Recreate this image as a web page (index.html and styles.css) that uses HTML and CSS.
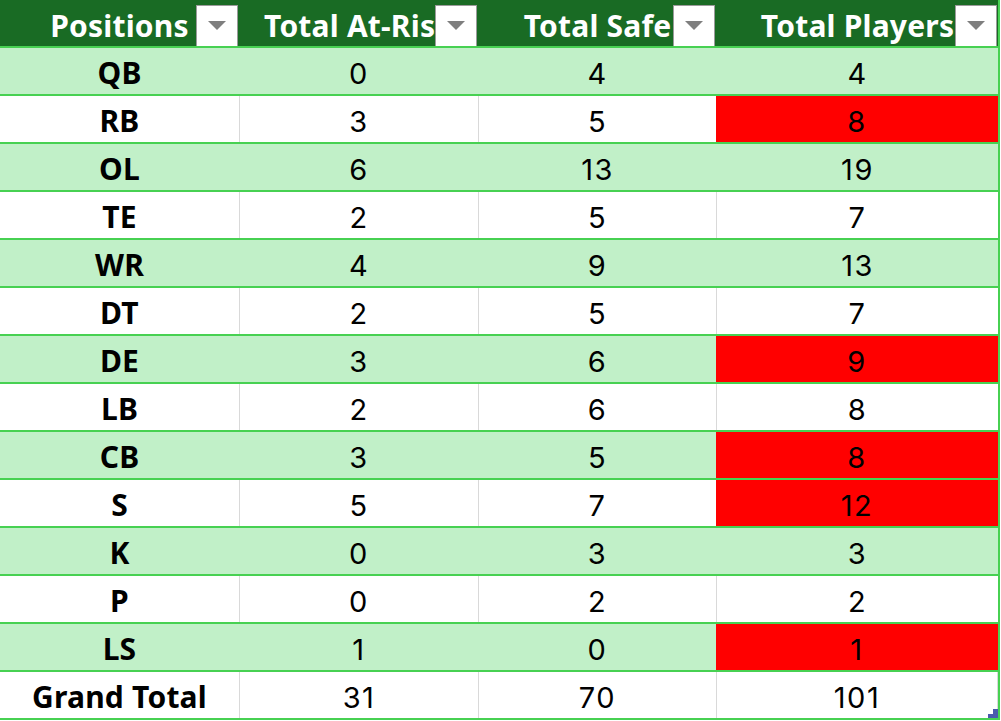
FILE: index.html
```html
<!DOCTYPE html>
<html>
<head>
<meta charset="utf-8">
<link rel="stylesheet" href="styles.css">
</head>
<body>
<div class="sheet">
  <div class="row head">
    <div class="cell"><span class="label">Positions</span><span class="dd"><span class="tri"></span></span></div>
    <div class="cell"><span class="label">Total At-Risk</span><span class="dd"><span class="tri"></span></span></div>
    <div class="cell"><span class="label">Total Safe</span><span class="dd"><span class="tri"></span></span></div>
    <div class="cell"><span class="label">Total Players</span><span class="dd"><span class="tri"></span></span></div>
  </div>
  <div class="row band"><div class="cell pos">QB</div><div class="cell">0</div><div class="cell">4</div><div class="cell">4</div></div>
  <div class="row"><div class="cell pos">RB</div><div class="cell">3</div><div class="cell">5</div><div class="cell red">8</div></div>
  <div class="row band"><div class="cell pos">OL</div><div class="cell">6</div><div class="cell">13</div><div class="cell">19</div></div>
  <div class="row"><div class="cell pos">TE</div><div class="cell">2</div><div class="cell">5</div><div class="cell">7</div></div>
  <div class="row band"><div class="cell pos">WR</div><div class="cell">4</div><div class="cell">9</div><div class="cell">13</div></div>
  <div class="row"><div class="cell pos">DT</div><div class="cell">2</div><div class="cell">5</div><div class="cell">7</div></div>
  <div class="row band"><div class="cell pos">DE</div><div class="cell">3</div><div class="cell">6</div><div class="cell red">9</div></div>
  <div class="row"><div class="cell pos">LB</div><div class="cell">2</div><div class="cell">6</div><div class="cell">8</div></div>
  <div class="row band"><div class="cell pos">CB</div><div class="cell">3</div><div class="cell">5</div><div class="cell red">8</div></div>
  <div class="row"><div class="cell pos">S</div><div class="cell">5</div><div class="cell">7</div><div class="cell red">12</div></div>
  <div class="row band"><div class="cell pos">K</div><div class="cell">0</div><div class="cell">3</div><div class="cell">3</div></div>
  <div class="row"><div class="cell pos">P</div><div class="cell">0</div><div class="cell">2</div><div class="cell">2</div></div>
  <div class="row band"><div class="cell pos">LS</div><div class="cell">1</div><div class="cell">0</div><div class="cell red">1</div></div>
  <div class="row total"><div class="cell pos">Grand Total</div><div class="cell">31</div><div class="cell">70</div><div class="cell">101</div><span class="handle"></span></div>
</div>
</body>
</html>
```
FILE: styles.css
```css
html, body {
  margin: 0;
  padding: 0;
  background: #ffffff;
}
body {
  font-family: Inter, "Noto Sans", "Liberation Sans", sans-serif;
  color: #000000;
}
.sheet {
  width: 1000px;
  border-right: 2px solid #47d152;
  box-sizing: border-box;
}
.row {
  position: relative;
  display: grid;
  grid-template-columns: 240px 239px 238px 281px;
  height: 48px;
  box-sizing: border-box;
  border-bottom: 2px solid #47d152;
  background: #ffffff;
}
.row.band {
  background: #c1f0c8;
}
.row.head {
  background: #196b24;
}
.cell {
  position: relative;
  display: flex;
  align-items: center;
  justify-content: center;
  border-right: 1px solid #d9d9d9;
  font-size: 29px;
  letter-spacing: 1.5px;
  line-height: 1;
  padding-top: 5px;
  overflow: hidden;
  white-space: nowrap;
}
.cell:last-child {
  border-right: none;
}
.band .cell,
.head .cell {
  border-right-color: transparent;
}
.cell.red {
  background: #ff0000;
  margin-left: -1px;
}
.pos,
.head .cell {
  font-family: "Noto Sans", "Liberation Sans", sans-serif;
  font-weight: 700;
  font-size: 30px;
  letter-spacing: 0.2px;
  padding-top: 3px;
}
.head .cell {
  color: #ffffff;
  padding-top: 5px;
}
.label {
  display: block;
}
.dd {
  position: absolute;
  top: 5px;
  right: 1px;
  width: 42px;
  height: 42px;
  box-sizing: border-box;
  background: #ffffff;
  border: 1px solid #9b9b9b;
  display: flex;
  align-items: center;
  justify-content: center;
}
.tri {
  width: 0;
  height: 0;
  border-left: 9px solid transparent;
  border-right: 9px solid transparent;
  border-top: 9px solid #7f7f7f;
  margin-top: -1px;
}
.handle {
  position: absolute;
  right: 0;
  bottom: 0;
  width: 10px;
  height: 9px;
  background:
    linear-gradient(#4b5aad, #4b5aad) right top / 5px 5px no-repeat,
    linear-gradient(#4b5aad, #4b5aad) left bottom / 10px 4px no-repeat;
}
```
